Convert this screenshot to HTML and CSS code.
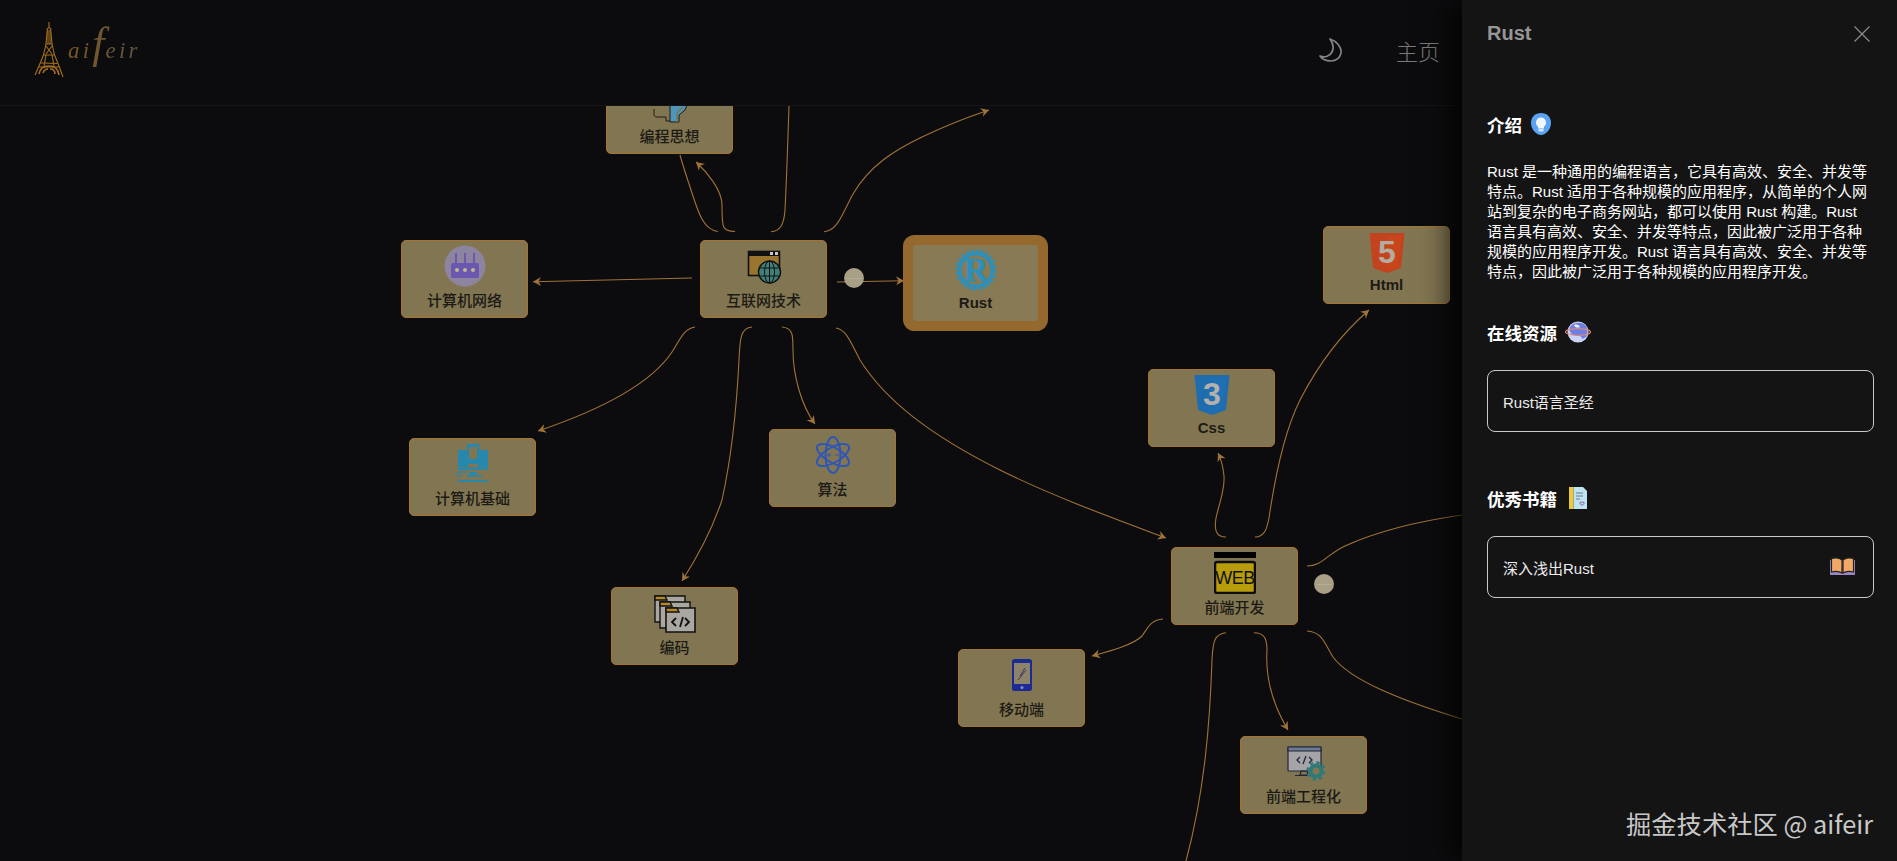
FILE: index.html
```html
<!DOCTYPE html>
<html lang="zh-CN">
<head>
<meta charset="utf-8">
<title>aifeir</title>
<link rel="stylesheet" href="styles.css">
</head>
<body>
<div class="app">
  <header class="topbar">
    <div class="logo">
      <svg class="tower" width="30" height="56" viewBox="0 0 30 56" fill="none" stroke="#a5701f" stroke-width="1.1">
        <path d="M15 0V6M13.6 6h2.8M13.4 6 12 22 9.5 33 5 44 1 53M16.6 6 18 22 20.5 33 25 44 29 55"/>
        <path d="M11.5 22h7M9 33h12M12 33 10 44M18 33l2 11M6.5 41l17 .5M4 45h22M14 8v14M16 8v14M12 24l6 8M18 24l-6 8"/>
        <path d="M5 52c1-6 5-8 10-8s9 2 10 9M9 51c1-3 3-4 5-4M16 47c3 0 5 2 5 5" stroke-width="1.6"/>
      </svg>
      <span class="logo-text">ai<span class="logo-f">f</span>eir</span>
    </div>
    <nav class="nav">
      <svg class="moon" width="24" height="24" viewBox="0 0 24 24" fill="none" stroke="#858585" stroke-width="1.7" stroke-linejoin="round">
        <path d="M11 1C17 3 23 9 22 15 21 20 17 23 12 23 7 23 3 21 1 18 6 20 11 18 13 14 15 10 14 5 11 1Z"/>
      </svg>
      <a class="nav-link">主页</a>
    </nav>
  </header>

  <main class="canvas">
    <div class="stage">
      <svg class="edges" width="1897" height="861" viewBox="0 0 1897 861" fill="none">
        <defs>
          <marker id="arrow" markerUnits="userSpaceOnUse" markerWidth="12" markerHeight="12" refX="10" refY="6" orient="auto">
            <path d="M2 1.5 10 6 2 10.5 4.5 6Z" fill="#a07338"/>
          </marker>
        </defs>
        <g class="edge">
          <path d="M718 231.5C704 230 699 215 691 190 687 178 683 166 680 155"/>
          <path marker-end="url(#arrow)" d="M735 231.5C722 231 722 228 722 205 722 190 707 172 696 162"/>
          <path d="M771 231.7C780 231 784 225 785 210 787 170 788 135 789 106"/>
          <path marker-end="url(#arrow)" d="M824 231.7C838 231 843 212 853 194 870 165 895 150 922 137 945 126 965 118 989 110"/>
          <path marker-end="url(#arrow)" d="M692 278 533 281.7"/>
          <path marker-end="url(#arrow)" d="M837 282 904 280.7"/>
          <path marker-end="url(#arrow)" d="M695 327C683 329 680 340 672 352 650 385 600 410 538 431"/>
          <path marker-end="url(#arrow)" d="M752 327C740 328 740 340 739 360 737 400 733 450 722 500 712 530 698 556 682 581"/>
          <path marker-end="url(#arrow)" d="M782 327C793 328 793 335 793 350 793 375 801 405 815 424"/>
          <path marker-end="url(#arrow)" d="M836 328C846 329 851 343 860 360 885 400 930 435 1000 470 1050 495 1110 517 1166 538"/>
          <path marker-end="url(#arrow)" d="M1226 537C1216 537 1214 530 1216 518 1220 500 1225 490 1224 476 1223 466 1221 459 1218 453"/>
          <path marker-end="url(#arrow)" d="M1255 537C1265 537 1267 528 1269 518 1276 470 1285 430 1300 400 1318 365 1340 335 1369 310"/>
          <path d="M1307 566C1322 566 1326 555 1345 546 1380 530 1420 521 1462 515"/>
          <path d="M1307 631C1322 632 1324 642 1333 657 1350 680 1400 700 1462 719"/>
          <path marker-end="url(#arrow)" d="M1163 619C1150 620 1148 628 1142 636 1133 645 1110 651 1092 656"/>
          <path marker-end="url(#arrow)" d="M1254 632.7C1264 633 1267 638 1267 650 1265 680 1273 705 1288 730"/>
          <path d="M1226 632.7C1215 634 1213 640 1212 660 1210 720 1205 790 1186 861"/>
        </g>
      </svg>

      <div class="node n-idea">
        <span class="slot">
          <svg width="42" height="42" viewBox="0 0 42 42" fill="none">
            <path d="M5 28v5c0 2 1 3 3 3h9v4h4" stroke="#1c1a14" stroke-width="1"/>
            <path d="M21 41V24h17l-2 5-6 5v7Z" fill="#4f97b8" stroke="#1c1a14" stroke-width="1"/>
            <path d="M28 41v-9l6-6" stroke="#807350" stroke-width="1.5"/>
          </svg>
        </span>
        <span class="label label-cjk">编程思想</span>
      </div>

      <div class="node n-net">
        <span class="slot">
          <svg width="42" height="42" viewBox="0 0 42 42">
            <circle cx="21" cy="21" r="20.5" fill="#8d85a0"/>
            <path d="M11 8h2v10h-2ZM20 8h2v10h-2ZM29 8h2v10h-2Z" fill="#6a58b0"/>
            <rect x="7" y="18" width="28" height="15" rx="1.5" fill="#6a58b0"/>
            <circle cx="13" cy="25" r="2" fill="#c2b88e"/>
            <circle cx="21" cy="25" r="2" fill="#c2b88e"/>
            <circle cx="29" cy="25" r="2" fill="#c2b88e"/>
          </svg>
        </span>
        <span class="label label-cjk">计算机网络</span>
      </div>

      <div class="node n-web">
        <span class="slot">
          <svg width="42" height="42" viewBox="0 0 42 42" fill="none">
            <rect x="5.5" y="6.5" width="31" height="24" fill="#9a7530" stroke="#111" stroke-width="1.6"/>
            <rect x="5" y="6" width="32" height="5" fill="#111"/>
            <rect x="27" y="7" width="3" height="3" fill="#c8c8c8"/>
            <rect x="32" y="7" width="3" height="3" fill="#c8c8c8"/>
            <circle cx="26.5" cy="27" r="11" fill="#3e8078" stroke="#111" stroke-width="1.4"/>
            <ellipse cx="26.5" cy="27" rx="5" ry="11" stroke="#111"/>
            <path d="M16 23h21M16 31h21M26.5 16v22" stroke="#111"/>
          </svg>
        </span>
        <span class="label label-cjk">互联网技术</span>
      </div>

      <div class="node n-rust">
        <span class="slot">
          <svg width="42" height="42" viewBox="0 0 42 42">
            <circle cx="21" cy="21" r="18.500" fill="none" stroke="#2a90bd" stroke-width="4" stroke-dasharray="3 1.800"/>
            <circle cx="21" cy="21" r="16" fill="none" stroke="#2a90bd" stroke-width="3"/>
            <text class="glyph glyph-r" x="21" y="31.500" text-anchor="middle">R</text>
          </svg>
        </span>
        <span class="label label-latin">Rust</span>
      </div>

      <div class="node n-html">
        <span class="slot">
          <svg width="42" height="42" viewBox="0 0 42 42">
            <path d="M3.500 2h35L35 37 21 42 7 37Z" fill="#c2431d"/>
            <path d="M21 5h14.500L32 35l-11 4Z" fill="#c9461d"/>
            <text class="glyph glyph-shield" x="21" y="32" text-anchor="middle" fill="#b3aca0">5</text>
          </svg>
        </span>
        <span class="label label-latin">Html</span>
      </div>

      <div class="node n-css">
        <span class="slot">
          <svg width="42" height="42" viewBox="0 0 42 42">
            <path d="M3.500 1h35L35 36 21 41 7 36Z" fill="#1f6cae"/>
            <path d="M21 4h14.500L32 34l-11 4Z" fill="#1f70b3"/>
            <text class="glyph glyph-shield" x="21" y="31" text-anchor="middle" fill="#b3b0ae">3</text>
          </svg>
        </span>
        <span class="label label-latin">Css</span>
      </div>

      <div class="node n-base">
        <span class="slot">
          <svg width="42" height="42" viewBox="0 0 42 42" fill="none">
            <path d="M6 7h10v17H6ZM26 7h10v17H26Z" fill="#2788ae"/>
            <path d="M15 1h12v20H15Z" fill="#2788ae"/>
            <rect x="17" y="4" width="8" height="12" fill="#827652"/>
            <path d="M6 25.500h30" stroke="#2788ae" stroke-width="2.500"/>
            <path d="M17 29h8v3h-8Z" fill="#2788ae"/>
            <path d="M15 33h15M15 29H7c-2 0-2 4 0 4h2" stroke="#2788ae" stroke-width="1.300"/>
            <path d="M7 37h27l3 2H5Z" fill="#2788ae"/>
          </svg>
        </span>
        <span class="label label-cjk">计算机基础</span>
      </div>

      <div class="node n-algo">
        <span class="slot">
          <svg width="42" height="42" viewBox="0 0 42 42" fill="none" stroke="#2e55b8" stroke-width="2">
            <ellipse cx="21" cy="21" rx="7.500" ry="18"/>
            <ellipse cx="21" cy="21" rx="7.500" ry="18" transform="rotate(60 21 21)"/>
            <ellipse cx="21" cy="21" rx="7.500" ry="18" transform="rotate(120 21 21)"/>
            <path d="M15 21h4M17 19v4M23 21h4" stroke-width="1"/>
          </svg>
        </span>
        <span class="label label-cjk">算法</span>
      </div>

      <div class="node n-code">
        <span class="slot">
          <svg width="42" height="42" viewBox="0 0 42 42" fill="none" stroke="#111" stroke-width="1.400">
            <path d="M1 4h30v26H1Z" fill="#a9a7a0"/>
            <path d="M1 4h10l2 4H1Z" fill="#b58a26"/>
            <path d="M6 10h30v26H6Z" fill="#a9a7a0"/>
            <path d="M6 10h10l2 4H6Z" fill="#b58a26"/>
            <path d="M12 16h29v24H12Z" fill="#a9a7a0" stroke-width="1.600"/>
            <path d="M12 16h11l2 4H12Z" fill="#b58a26"/>
            <path d="M22 26l-4 4 4 4M31 26l4 4-4 4M29 25l-3 10" stroke-width="1.800"/>
          </svg>
        </span>
        <span class="label label-cjk">编码</span>
      </div>

      <div class="node n-front">
        <span class="slot">
          <svg width="42" height="42" viewBox="0 0 42 42">
            <rect y="0" width="42" height="6" fill="#000"/>
            <rect x="1" y="10" width="40" height="31" rx="2" fill="#b79d0c" stroke="#0d0d0d" stroke-width="2.500"/>
            <text class="glyph glyph-web" x="21" y="32" text-anchor="middle">WEB</text>
          </svg>
        </span>
        <span class="label label-cjk">前端开发</span>
      </div>

      <div class="node n-mobile">
        <span class="slot">
          <svg width="42" height="42" viewBox="0 0 42 42" fill="none">
            <rect x="11" y="5" width="20" height="32" rx="2.500" fill="#1c2a96"/>
            <rect x="13" y="9" width="16" height="21" fill="#8c8368"/>
            <path d="M19 22 24 14M17 26l8-10" stroke="#3a3560"/>
            <circle cx="21" cy="33.500" r="1.500" fill="#8c8cc0"/>
          </svg>
        </span>
        <span class="label label-cjk">移动端</span>
      </div>

      <div class="node n-eng">
        <span class="slot">
          <svg width="42" height="42" viewBox="0 0 42 42" fill="none" stroke="#22253a" stroke-width="1.200">
            <rect x="5" y="6" width="33" height="24" rx="1" fill="#a5a4a6"/>
            <path d="M5 6h33v4H5Z" fill="#6a7a90"/>
            <path d="M18 30h6l1 4h-8ZM12 34.500h16"/>
            <path d="M17 16l-3 3 3 3M26 16l3 3-3 3M23 15l-3 8" stroke-width="1.300"/>
            <circle cx="33" cy="30" r="5.500" fill="#827652" stroke="#2f7a78" stroke-width="4"/>
            <circle cx="33" cy="30" r="8.500" stroke="#2f7a78" stroke-width="2.500" stroke-dasharray="3.300 3.400"/>
          </svg>
        </span>
        <span class="label label-cjk">前端工程化</span>
      </div>

      <span class="toggle t-web"></span>
      <span class="toggle t-front"></span>
    </div>
  </main>

  <aside class="drawer">
    <div class="drawer-head">
      <h2 class="drawer-title">Rust</h2>
      <svg class="close" width="16" height="16" viewBox="0 0 16 16" stroke="#8c8c8c" stroke-width="1.200"><path d="M.5.500l15 15M15.500.500l-15 15"/></svg>
    </div>
    <div class="drawer-body">
      <section class="block">
        <h3 class="block-title">介绍
          <svg width="22" height="22" viewBox="0 0 22 22">
            <path d="M11 0c6 0 10 4 10 10s-5 12-10 12S1 16 1 10 5 0 11 0Z" fill="#5aa2f2"/>
            <path d="M11 4.500a5 5 0 0 0-3 9v2h6v-2a5 5 0 0 0-3-9Z" fill="#f0f6fc"/>
            <rect x="8.500" y="16" width="5" height="2.500" fill="#d5e4f5"/>
          </svg>
        </h3>
        <p class="intro">Rust 是一种通用的编程语言，它具有高效、安全、并发等特点。Rust 适用于各种规模的应用程序，从简单的个人网站到复杂的电子商务网站，都可以使用 Rust 构建。Rust 语言具有高效、安全、并发等特点，因此被广泛用于各种规模的应用程序开发。Rust 语言具有高效、安全、并发等特点，因此被广泛用于各种规模的应用程序开发。</p>
      </section>
      <section class="block">
        <h3 class="block-title">在线资源
          <svg width="26" height="22" viewBox="0 0 26 22" fill="none">
            <circle cx="13" cy="11" r="10.500" fill="#c9d4f7"/>
            <path d="M5 6c3-5 12-6 16-1 2 3 2 8 0 11l-4 2c1-4-6-3-9-4-3-2-4-5-3-8Z" fill="#6e7fe0"/>
            <path d="M9 4c3-1 5 0 6 2-2 1-5 1-6-2Z" fill="#eef1fc"/>
            <ellipse cx="13" cy="11" rx="12.500" ry="3.200" stroke="#e08a78" stroke-width="1.100"/>
          </svg>
        </h3>
        <a class="card">Rust语言圣经</a>
      </section>
      <section class="block">
        <h3 class="block-title">优秀书籍
          <svg class="icon-note" width="18" height="22" viewBox="0 0 18 22" fill="none">
            <path d="M0 0h4.500v22H0Z" fill="#f0c93a"/>
            <path d="M4.500 0H14l4 4v18H4.500Z" fill="#bfe3f2"/>
            <path d="M7 6h7M7 9h7M7 12h4" stroke="#55606e" stroke-width=".8"/>
            <path d="M13 18.500l-2-2c-.6-1.400 1.400-2 2-.7.600-1.300 2.600-.7 2 .7Z" stroke="#7a4a8a" stroke-width=".9"/>
          </svg>
        </h3>
        <a class="card">深入浅出Rust
          <svg width="27" height="20" viewBox="0 0 27 20" fill="none">
            <path d="M1 3v15h25V3" fill="#9a86c2"/>
            <path d="M2.500 1.500C6 .5 10 .5 13 3v13c-3-2-7-2-10.500-1Z" fill="#f4a868" stroke="#222" stroke-width="1.200"/>
            <path d="M24.500 1.500C21 .5 17 .5 14 3v13c3-2 7-2 10.500-1Z" fill="#f4a868" stroke="#222" stroke-width="1.200"/>
          </svg>
        </a>
      </section>
    </div>
  </aside>

  <div class="watermark">掘金技术社区 @ aifeir</div>
</div>
</body>
</html>
```

FILE: styles.css
```css
* { box-sizing: border-box; }
html, body { margin: 0; height: 100%; }
body {
  background: #0c0c0e;
  font-family: "Liberation Sans", "Noto Sans CJK SC", sans-serif;
  overflow: hidden;
}
.app {
  position: relative;
  width: 100%;
  height: 100vh;
  display: flex;
  flex-direction: column;
  overflow: hidden;
}

/* top bar */
.topbar {
  flex: 0 0 106px;
  display: flex;
  align-items: flex-start;
  justify-content: space-between;
  padding: 22px 457px 0 34px;
  border-bottom: 1px solid #151517;
}
.logo { display: flex; align-items: center; gap: 4px; height: 56px; }
.logo-text {
  font: italic 400 23px/56px "Liberation Serif", serif;
  letter-spacing: 3.200px;
  background: linear-gradient(90deg, #7d5a22, #5a5244);
  -webkit-background-clip: text;
  background-clip: text;
  color: transparent;
  margin-top: 1px;
}
.logo-f { font-size: 44px; font-weight: 400; line-height: 0; letter-spacing: 1px; }
.nav { display: flex; align-items: center; gap: 53px; padding: 14px 0 0; }
.moon { display: block; }
.nav-link { font: 300 22px "Noto Sans CJK SC", sans-serif; color: #7a7a7a; line-height: 28px; }

/* mind-map canvas */
.canvas { flex: 1; position: relative; overflow: hidden; }
.stage { position: absolute; left: 0; top: -106px; width: 1897px; height: 861px; }
.edges { position: absolute; left: 0; top: 0; }
.edge path { stroke: #a07338; stroke-width: 1.100; }

.node {
  position: absolute;
  width: 127px;
  height: 78px;
  padding-top: 4px;
  display: flex;
  flex-direction: column;
  align-items: center;
  background: #827652;
  border: 1.500px solid #a67430;
  border-radius: 5px;
  color: #1c1a14;
}
.slot { display: block; height: 42px; }
.slot svg { display: block; }
.label { font-size: 15px; line-height: 24px; white-space: nowrap; }
.label-cjk { font-weight: 500; margin-top: 2px; }
.label-latin { font-weight: 700; }

.n-idea { left: 606px; top: 76px; }
.n-net { left: 401px; top: 240px; }
.n-web { left: 700px; top: 240px; }
.n-rust { left: 912px; top: 243.500px; background: #877a55; border-color: #95692d; box-shadow: 0 0 0 9px #95692d; border-radius: 4px; }
.n-html { left: 1323px; top: 226px; }
.n-css { left: 1148px; top: 369px; }
.n-base { left: 409px; top: 438px; }
.n-algo { left: 769px; top: 429px; }
.n-code { left: 611px; top: 587px; }
.n-front { left: 1171px; top: 547px; }
.n-mobile { left: 958px; top: 649px; }
.n-eng { left: 1240px; top: 736px; }

.glyph { font-family: "Liberation Sans", sans-serif; font-weight: 700; }
.glyph-r { font-family: "Liberation Serif", serif; font-size: 33px; fill: #2a90bd; stroke: #2a90bd; stroke-width: .5; }
.glyph-shield { font-size: 32px; }
.glyph-web { font-size: 18px; font-weight: 400; fill: #111; letter-spacing: -.5px; }

.toggle {
  position: absolute;
  width: 20px;
  height: 20px;
  border-radius: 50%;
  background: #a89f86;
}
.toggle::after {
  content: "";
  position: absolute;
  left: 3px;
  right: 3px;
  top: 9.500px;
  height: 1px;
  background: #b5ad96;
}
.t-web { left: 844px; top: 268px; }
.t-front { left: 1314px; top: 574px; }

/* drawer */
.drawer {
  position: absolute;
  top: 0;
  right: 0;
  bottom: 0;
  width: 435px;
  background: #141414;
  color: #fff;
  box-shadow: -8px 0 30px rgba(0, 0, 0, .95);
  display: flex;
  flex-direction: column;
}
.drawer-head {
  flex: 0 0 110px;
  display: flex;
  align-items: flex-start;
  justify-content: space-between;
  padding: 22px 27px 0 25px;
}
.drawer-title { margin: 0; font-size: 20px; line-height: 23px; font-weight: 700; color: #969696; }
.close { margin-top: 4px; }
.drawer-body { padding: 0 23px 0 25px; display: flex; flex-direction: column; }
.block { margin-bottom: 36px; }
.block-title {
  margin: 0 0 24px;
  height: 28px;
  display: flex;
  align-items: center;
  gap: 8px;
  font-size: 17.500px;
  font-weight: 700;
  color: #fff;
}
.icon-note { margin-left: 4px; }
.intro { margin: 0; font-size: 15px; line-height: 20px; color: #fff; }
.card {
  display: flex;
  align-items: center;
  justify-content: space-between;
  height: 62px;
  margin: 1px 0 16px;
  padding: 0 17px 0 15px;
  border: 1px solid #c9c9c9;
  border-radius: 8px;
  font-size: 15px;
  color: #ececec;
}

.watermark {
  position: absolute;
  right: 24px;
  bottom: 20px;
  font-family: "Noto Sans CJK SC", sans-serif;
  font-size: 25.300px;
  line-height: 36px;
  color: #c8c8c8;
  white-space: nowrap;
}
```
